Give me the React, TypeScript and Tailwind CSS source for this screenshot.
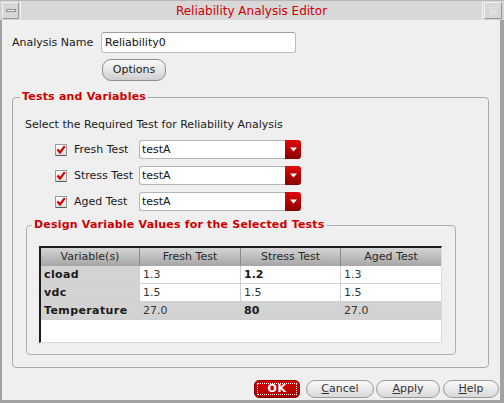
import React from 'react';

const CheckBox = () => (
  <span className="shrink-0 w-[12px] h-[12px] border border-[#9a9a9a] border-b-[#5a5a5a] rounded-[1px] bg-gradient-to-b from-white to-[#dedede] flex items-center justify-center">
    <svg width="10" height="9" viewBox="0 0 10 9">
      <path d="M1.5 4.5 L4 7.5 L8.8 1.2" stroke="#d20000" strokeWidth="2.2" fill="none" />
    </svg>
  </span>
);

const Combo = () => (
  <div className="shrink-0 flex h-[19px] w-[162px]">
    <div className="flex-1 flex items-center bg-white border border-[#b4b4b4] border-r-0 rounded-l-[3px] pl-[2px] text-[#111]">testA</div>
    <div className="w-[16px] rounded-r-[3px] bg-gradient-to-b from-[#e00808] to-[#8a0000] flex items-center justify-center">
      <svg width="7" height="5" viewBox="0 0 7 5">
        <path d="M0 0.5 H7 L3.5 4.5 Z" fill="#fff" />
      </svg>
    </div>
  </div>
);

const rows = [
  { name: 'cload', fresh: '1.3', stress: '1.2', aged: '1.3', gray: false },
  { name: 'vdc', fresh: '1.5', stress: '1.5', aged: '1.5', gray: false },
  { name: 'Temperature', fresh: '27.0', stress: '80', aged: '27.0', gray: true },
];

export default function App() {
  return (
    <div className="w-[504px] h-[403px] flex flex-col overflow-hidden font-['DejaVu_Sans',sans-serif] text-[11px] leading-[14px] text-[#1a1a1a]">
      {/* title bar */}
      <div className="h-[20px] flex bg-[#d3d3d3] border-t border-[#b8b8b8]">
        <div className="w-[17px] h-[17px] ml-[2px] mt-[1px] border border-t-[#f4f4f4] border-l-[#f4f4f4] border-r-[#9a9a9a] border-b-[#9a9a9a] bg-[#d6d6d6] flex items-center justify-center">
          <span className="w-[10px] h-[3px] border border-[#8a8a8a] bg-[#f2f2f2]"></span>
        </div>
        <div className="flex-1 ml-[1px] mr-[1px] flex items-center justify-center bg-[#d8d8d8] border-l border-r border-[#f2f2f2] text-[12px] text-[#cc0000]">
          Reliability Analysis Editor
        </div>
        <div className="w-[18px] h-[17px] mt-[1px] mr-[2px] border border-t-[#f4f4f4] border-l-[#f4f4f4] border-r-[#9a9a9a] border-b-[#9a9a9a] bg-[#d6d6d6] flex items-center justify-center">
          <svg width="11" height="11" viewBox="0 0 11 11">
            <path d="M1 1 L10 10 M10 1 L1 10" stroke="#f4f4f4" strokeWidth="2.5" strokeDasharray="1.5 1" />
            <path d="M1 1 L10 10 M10 1 L1 10" stroke="#b0b0b0" strokeWidth="1" strokeDasharray="1 1.5" />
          </svg>
        </div>
      </div>

      {/* body */}
      <div className="flex-1 flex flex-col bg-[#efefef] border-l-[2px] border-r-[4px] border-b-[3px] border-[#a2a2a2] pl-[10px] pt-[12px]">
        <div className="flex items-center">
          <span className="w-[89px]">Analysis Name</span>
          <div className="w-[195px] h-[21px] flex items-center bg-white border border-[#bdbdbd] border-t-[#9c9c9c] rounded-[3px] pl-[3px] text-[#111]">Reliability0</div>
        </div>
        <button className="ml-[90px] mt-[6px] w-[64px] h-[22px] rounded-[9px] border border-[#8e8e8e] bg-gradient-to-b from-[#fafafa] to-[#cfcfcf] text-[#222] flex items-center justify-center">
          Options
        </button>

        <fieldset className="mt-[9px] w-[477px] border border-[#a9a9a9] rounded-[4px] p-0">
          <legend className="ml-[7px] px-[2px] font-bold text-[#cc0000] tracking-[0.2px]">Tests and Variables</legend>
          <div className="pl-[12px] pb-[12px]">
            <div className="pt-[14px] whitespace-nowrap">Select the Required Test for Reliability Analysis</div>
            <div className="mt-[8px] flex flex-col gap-[7px] ml-[30px]">
              {['Fresh Test', 'Stress Test', 'Aged Test'].map((t) => (
                <div key={t} className="flex items-center h-[19px]">
                  <CheckBox />
                  <span className="shrink-0 w-[72px] pl-[7px] whitespace-nowrap">{t}</span>
                  <Combo />
                </div>
              ))}
            </div>

            <fieldset className="mt-[7px] ml-[1px] w-[430px] border border-[#b0b0b0] rounded-[4px] p-0">
              <legend className="ml-[5px] px-[2px] font-bold text-[#cc0000] tracking-[0.2px]">Design Variable Values for the Selected Tests</legend>
              <div className="pl-[12px] pb-[11px]">
                <div className="mt-[14px] w-[403px] h-[97px] bg-white border-t-2 border-l-2 border-t-[#1c1c1c] border-l-[#1c1c1c] border-r border-b border-r-[#dcdcdc] border-b-[#dcdcdc]">
                  <div className="flex h-[18px] bg-gradient-to-b from-[#d4d4d4] to-[#a6a6a6] text-[#2a2a2a]">
                    <div className="w-[99px] flex items-center justify-center border-r border-[#8a8a8a]">Variable(s)</div>
                    <div className="w-[101px] flex items-center justify-center border-r border-[#8a8a8a]">Fresh Test</div>
                    <div className="w-[100px] flex items-center justify-center border-r border-[#8a8a8a]">Stress Test</div>
                    <div className="w-[100px] flex items-center justify-center">Aged Test</div>
                  </div>
                  {rows.map((r) => (
                    <div key={r.name} className={`flex h-[18px] border-b border-[#d0d0d0] ${r.gray ? 'bg-[#d3d3d3]' : 'bg-white'}`}>
                      <div className="w-[99px] flex items-center pl-[3px] font-bold tracking-[0.4px] bg-[#d3d3d3] border-r border-[#d0d0d0]">{r.name}</div>
                      <div className="w-[101px] flex items-center pl-[3px] border-r border-[#d0d0d0] text-[#333]">{r.fresh}</div>
                      <div className={`w-[100px] flex items-center pl-[3px] border-r border-[#d0d0d0] ${r.stress === '1.5' ? 'text-[#333]' : 'font-bold'}`}>{r.stress}</div>
                      <div className="w-[100px] flex items-center pl-[3px] text-[#333]">{r.aged}</div>
                    </div>
                  ))}
                </div>
              </div>
            </fieldset>
          </div>
        </fieldset>

        <div className="mt-[12px] flex items-center justify-end pr-[1px] text-[#333]">
          <button className="w-[46px] h-[18px] rounded-[5px] bg-gradient-to-b from-[#d80000] to-[#a80000] border border-[#8a0000] p-[2px]">
            <span className="w-full h-full flex items-center justify-center border border-dotted border-white font-bold text-white tracking-[0.5px]">OK</span>
          </button>
          <button className="ml-[6px] w-[68px] h-[18px] rounded-[9px] border border-[#9a9a9a] bg-gradient-to-b from-[#fbfbfb] to-[#d8d8d8] flex items-center justify-center">
            <span><span className="underline">C</span>ancel</span>
          </button>
          <button className="ml-[2px] w-[64px] h-[18px] rounded-[9px] border border-[#9a9a9a] bg-gradient-to-b from-[#fbfbfb] to-[#d8d8d8] flex items-center justify-center">
            <span><span className="underline">A</span>pply</span>
          </button>
          <button className="ml-[3px] w-[56px] h-[18px] rounded-[9px] border border-[#9a9a9a] bg-gradient-to-b from-[#fbfbfb] to-[#d8d8d8] flex items-center justify-center">
            <span><span className="underline">H</span>elp</span>
          </button>
        </div>
      </div>
    </div>
  );
}
